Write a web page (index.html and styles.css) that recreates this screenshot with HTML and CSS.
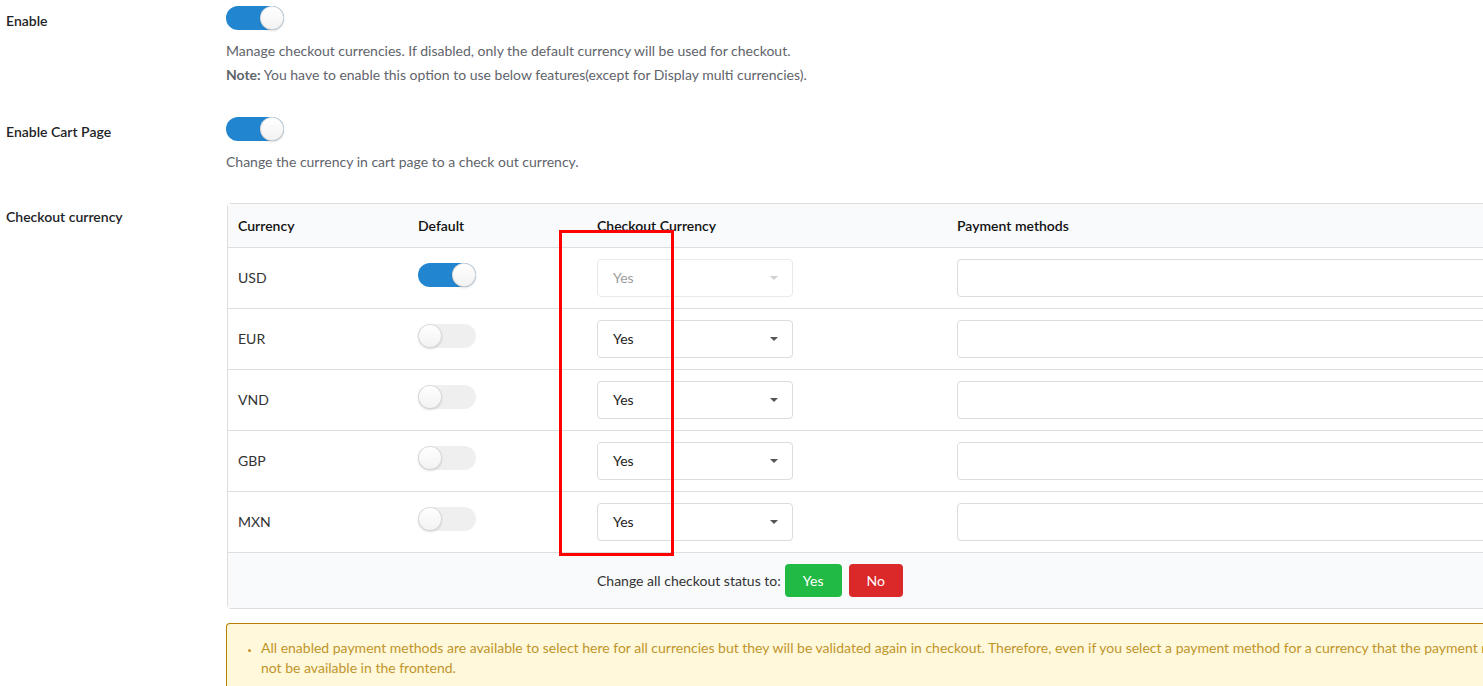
FILE: index.html
```html
<!DOCTYPE html>
<html lang="en">
<head>
    <meta charset="UTF-8">
    <meta name="viewport" content="width=device-width, initial-scale=1.0">
    <title>Checkout currency settings</title>
    <link rel="stylesheet" href="styles.css">
</head>
<body>
    <div class="settings">
        <!-- Enable -->
        <div class="setting-row">
            <div class="setting-label">Enable</div>
            <div class="setting-field">
                <span class="toggle checked"><span class="knob"></span></span>
                <p class="description first">Manage checkout currencies. If disabled, only the default currency will be used for checkout.</p>
                <p class="description"><strong>Note:</strong> You have to enable this option to use below features(except for Display multi currencies).</p>
            </div>
        </div>

        <!-- Enable Cart Page -->
        <div class="setting-row">
            <div class="setting-label">Enable Cart Page</div>
            <div class="setting-field">
                <span class="toggle checked"><span class="knob"></span></span>
                <p class="description first">Change the currency in cart page to a check out currency.</p>
            </div>
        </div>

        <!-- Checkout currency -->
        <div class="setting-row table-row">
            <div class="setting-label">Checkout currency</div>
            <div class="setting-field">
                <div class="table-wrap">
                    <table class="currency-table">
                        <thead>
                            <tr>
                                <th class="col-currency">Currency</th>
                                <th class="col-default">Default</th>
                                <th class="col-checkout">Checkout Currency</th>
                                <th>Payment methods</th>
                            </tr>
                        </thead>
                        <tbody>
                            <tr>
                                <td>USD</td>
                                <td><span class="toggle checked"><span class="knob"></span></span></td>
                                <td><div class="dropdown disabled"><span>Yes</span><i class="caret"></i></div></td>
                                <td><div class="multi-select"></div></td>
                            </tr>
                            <tr>
                                <td>EUR</td>
                                <td><span class="toggle"><span class="knob"></span></span></td>
                                <td><div class="dropdown"><span>Yes</span><i class="caret"></i></div></td>
                                <td><div class="multi-select"></div></td>
                            </tr>
                            <tr>
                                <td>VND</td>
                                <td><span class="toggle"><span class="knob"></span></span></td>
                                <td><div class="dropdown"><span>Yes</span><i class="caret"></i></div></td>
                                <td><div class="multi-select"></div></td>
                            </tr>
                            <tr>
                                <td>GBP</td>
                                <td><span class="toggle"><span class="knob"></span></span></td>
                                <td><div class="dropdown"><span>Yes</span><i class="caret"></i></div></td>
                                <td><div class="multi-select"></div></td>
                            </tr>
                            <tr>
                                <td>MXN</td>
                                <td><span class="toggle"><span class="knob"></span></span></td>
                                <td><div class="dropdown"><span>Yes</span><i class="caret"></i></div></td>
                                <td><div class="multi-select"></div></td>
                            </tr>
                        </tbody>
                        <tfoot>
                            <tr>
                                <td></td>
                                <td></td>
                                <td colspan="2">
                                    <div class="bulk-status">
                                        <span>Change all checkout status to:</span>
                                        <button class="btn btn-yes">Yes</button>
                                        <button class="btn btn-no">No</button>
                                    </div>
                                </td>
                            </tr>
                        </tfoot>
                    </table>
                    <!-- highlight frame -->
                    <div class="highlight-box"></div>
                </div>

                <div class="notice">
                    <ul>
                        <li>All enabled payment methods are available to select here for all currencies but they will be validated again in checkout. Therefore, even if you select a payment method for a currency that the payment method does not support, it will not be available in the frontend.</li>
                    </ul>
                </div>
            </div>
        </div>
    </div>
</body>
</html>
```

FILE: styles.css
```css
:root {
    --text-dark: #1d2327;
    --text-muted: #5f646b;
    --toggle-blue: #2185d0;
    --border-light: #dedede;
    --header-bg: #f9fafb;
    --notice-bg: #fff8db;
    --notice-border: #b58105;
    --notice-text: #c0952a;
}

html, body {
    margin: 0;
    padding: 0;
    overflow: hidden;
}

body {
    font-family: "Lato", "Segoe UI", sans-serif;
    font-size: 14px;
    line-height: 20px;
    color: #32373c;
    background: #ffffff;
}

.settings {
    padding-left: 6px;
    width: 1760px;
}

/* Form rows */
.setting-row {
    display: grid;
    grid-template-columns: 220px 1fr;
    padding-top: 6px;
    padding-bottom: 26px;
}

.setting-row.table-row {
    padding-top: 5px;
}

.setting-label {
    font-weight: 600;
    color: var(--text-dark);
    padding-top: 5px;
}

.table-row .setting-label {
    padding-top: 4px;
}

.description {
    margin: 4px 0 0;
    color: var(--text-muted);
}

.description.first {
    margin-top: 11px;
}

.description strong {
    font-weight: 700;
}

/* Toggle switch */
.toggle {
    display: inline-block;
    position: relative;
    width: 58px;
    height: 24px;
    border-radius: 12px;
    background: #efefef;
    vertical-align: middle;
}

.toggle.checked {
    background: var(--toggle-blue);
}

.toggle .knob {
    position: absolute;
    top: 0;
    left: 0;
    width: 24px;
    height: 24px;
    border-radius: 50%;
    background: linear-gradient(#ffffff, #f2f2f2);
    box-shadow: 0 1px 2px 0 rgba(34, 36, 38, 0.15), 0 0 0 1px rgba(34, 36, 38, 0.15) inset;
}

.toggle.checked .knob {
    left: 34px;
}

/* Currency table */
.table-wrap {
    position: relative;
    margin-left: 1px;
}

.currency-table {
    width: 1490px;
    border-collapse: separate;
    border-spacing: 0;
    border: 1px solid var(--border-light);
    border-radius: 4px;
    color: #333;
}

.currency-table th {
    text-align: left;
    font-weight: 600;
    color: #111;
    background: var(--header-bg);
    height: 43px;
    padding: 0 10px;
    border-bottom: 1px solid var(--border-light);
}

.col-currency { width: 160px; }
.col-default { width: 159px; }
.col-checkout { width: 340px; }

.currency-table td {
    height: 60px;
    padding: 0 10px;
    border-bottom: 1px solid var(--border-light);
}

.currency-table td .toggle {
    margin-bottom: 6px;
}

.currency-table tfoot td {
    height: 55px;
    border-bottom: none;
    background: var(--header-bg);
}

/* Selection dropdown */
.dropdown {
    display: flex;
    align-items: center;
    justify-content: space-between;
    box-sizing: border-box;
    width: 196px;
    height: 38px;
    padding: 0 14px 0 15px;
    border: 1px solid #dcdcdc;
    border-radius: 4px;
    background: #fff;
    color: #222;
}

.dropdown .caret {
    width: 0;
    height: 0;
    border-left: 4px solid transparent;
    border-right: 4px solid transparent;
    border-top: 4px solid #555;
}

.dropdown.disabled {
    opacity: 0.45;
    border-color: #d0d0d0;
}

.dropdown.disabled .caret {
    opacity: 0.6;
}

.multi-select {
    box-sizing: border-box;
    height: 38px;
    width: 100%;
    border: 1px solid #dcdcdc;
    border-radius: 4px;
    background: #fff;
}

/* Bulk status buttons */
.bulk-status {
    display: flex;
    align-items: center;
    gap: 4px;
    color: #333;
}

.btn {
    font-family: inherit;
    font-size: 14px;
    border: none;
    border-radius: 4px;
    color: #fff;
    height: 33px;
    cursor: pointer;
}

.btn-yes {
    background: #21ba45;
    width: 57px;
}

.btn-no {
    background: #db2828;
    width: 54px;
    margin-left: 3px;
}

/* Red highlight frame */
.highlight-box {
    position: absolute;
    left: 332px;
    top: 27px;
    width: 109px;
    height: 320px;
    border: 3px solid #ff0000;
    pointer-events: none;
}

/* Notice */
.notice {
    margin-top: 14px;
    width: 1452px;
    background: var(--notice-bg);
    color: var(--notice-text);
    border-radius: 4px;
    box-shadow: 0 0 0 1px var(--notice-border) inset;
    padding: 15px 0 16px;
}

.notice ul {
    margin: 0;
    padding-left: 35px;
}

.notice li::marker {
    font-size: 10px;
}
```
